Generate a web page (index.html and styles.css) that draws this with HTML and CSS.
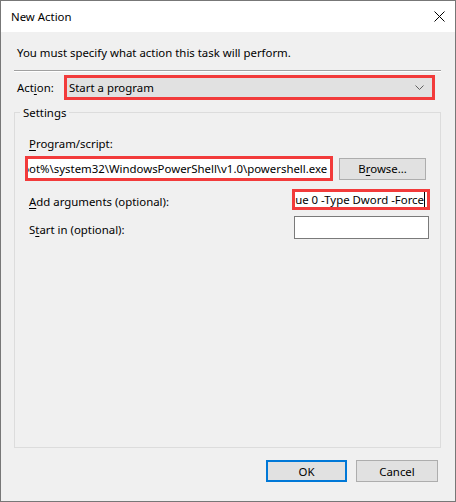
FILE: index.html
```html
<!DOCTYPE html>
<html lang="en">
<head>
  <meta charset="UTF-8" />
  <title>New Action</title>
  <link rel="stylesheet" href="styles.css">
</head>
<body>
  <div class="window">
    <div class="titlebar">
      <span class="title">New Action</span>
      <svg class="close" width="11" height="11" viewBox="0 0 11 11">
        <path d="M0.5 0.5 L10.5 10.5 M10.5 0.5 L0.5 10.5" stroke="#000" stroke-width="1" fill="none"/>
      </svg>
    </div>

    <div class="content">
      <p class="intro">You must specify what action this task will perform.</p>
      <div class="separator"></div>

      <div class="action-row">
        <span class="label">Act<u>i</u>on:</span>
        <div class="combo marked">
          <span>Start a program</span>
          <svg class="chevron" width="9" height="5" viewBox="0 0 9 5">
            <path d="M0.5 0.5 L4.5 4.5 L8.5 0.5" stroke="#606060" stroke-width="1" fill="none"/>
          </svg>
        </div>
      </div>

      <fieldset class="settings">
        <legend>Settings</legend>

        <div class="label"><u>P</u>rogram/script:</div>
        <div class="program-row">
          <div class="field marked wide">
            <span>%SystemRoot%\system32\WindowsPowerShell\v1.0\powershell.exe</span>
          </div>
          <button class="btn browse">B<u>r</u>owse...</button>
        </div>

        <div class="option-row args">
          <span class="label"><u>A</u>dd arguments (optional):</span>
          <div class="field marked short">
            <span>-Value 0 -Type Dword -Force</span><i class="caret"></i>
          </div>
        </div>

        <div class="option-row start">
          <span class="label">S<u>t</u>art in (optional):</span>
          <div class="field plain"></div>
        </div>
      </fieldset>

      <div class="footer">
        <button class="btn ok">OK</button>
        <button class="btn">Cancel</button>
      </div>
    </div>
  </div>
</body>
</html>
```

FILE: styles.css
```css
* {
  box-sizing: border-box;
}

html, body {
  margin: 0;
  height: 100%;
}

body {
  font-family: "Noto Sans", "Liberation Sans", sans-serif;
  font-size: 11.4px;
  line-height: 15px;
  color: #000;
  background: #f0f0f0;
}

u {
  text-decoration-thickness: 1px;
  text-underline-offset: 2px;
}

.window {
  height: 100%;
  display: flex;
  flex-direction: column;
  border: 1px solid #777;
  background: #f0f0f0;
}

.titlebar {
  height: 31px;
  flex: none;
  display: flex;
  align-items: center;
  justify-content: space-between;
  padding: 0 10px 0 10px;
  background: #fff;
}

.content {
  flex: 1;
  display: flex;
  flex-direction: column;
  padding: 13px 14px 19px 13px;
}

.intro {
  margin: 0 0 10px 3px;
}

.separator {
  height: 2px;
  border-top: 1px solid #a0a0a0;
  border-bottom: 1px solid #fff;
}

.action-row {
  display: flex;
  align-items: center;
  margin-top: 3px;
}

.action-row .label {
  margin-left: 3px;
  width: 47px;
}

.marked {
  border: 3px solid #f23b3b;
}

.combo {
  flex: 1;
  margin-right: 6px;
  height: 25px;
  display: flex;
  align-items: center;
  justify-content: space-between;
  padding: 0 8px 0 2px;
  background: #e1e1e1;
}

.settings {
  flex: 1;
  margin: 5px 0 0 0;
  padding: 16px 14px 0 14px;
  border: 1px solid #dcdcdc;
  min-width: 0;
}

.settings legend {
  margin-left: -9px;
  padding: 0 3px;
}

.program-row {
  display: flex;
  align-items: center;
  margin: 5px 0 0 -4px;
}

.field {
  background: #fff;
  display: flex;
  align-items: center;
  justify-content: flex-end;
  overflow: hidden;
  white-space: nowrap;
}

.field span {
  flex: none;
}

.wide {
  width: 309px;
  height: 25px;
  padding-right: 3px;
}

.short {
  width: 138px;
  height: 21px;
  padding-right: 2px;
}

.caret {
  flex: none;
  width: 1px;
  height: 15px;
  background: #000;
}

.plain {
  width: 135px;
  height: 23px;
  border: 1px solid #7a7a7a;
}

.btn {
  font: inherit;
  color: #000;
  background: #e1e1e1;
  border: 1px solid #adadad;
  height: 22px;
  width: 82px;
  padding: 0;
}

.browse {
  width: 87px;
  margin-left: 6px;
}

.option-row {
  display: flex;
  align-items: center;
  justify-content: space-between;
}

.option-row .label {
  padding-top: 3px;
}

.args {
  margin-top: 8px;
  margin-right: -4px;
}

.start {
  margin-top: 6px;
  margin-right: -3px;
}

.footer {
  display: flex;
  justify-content: flex-end;
  gap: 9px;
  margin: 12px 3px 0 0;
}

.ok {
  width: 81px;
  border: 2px solid #0078d7;
}
```
